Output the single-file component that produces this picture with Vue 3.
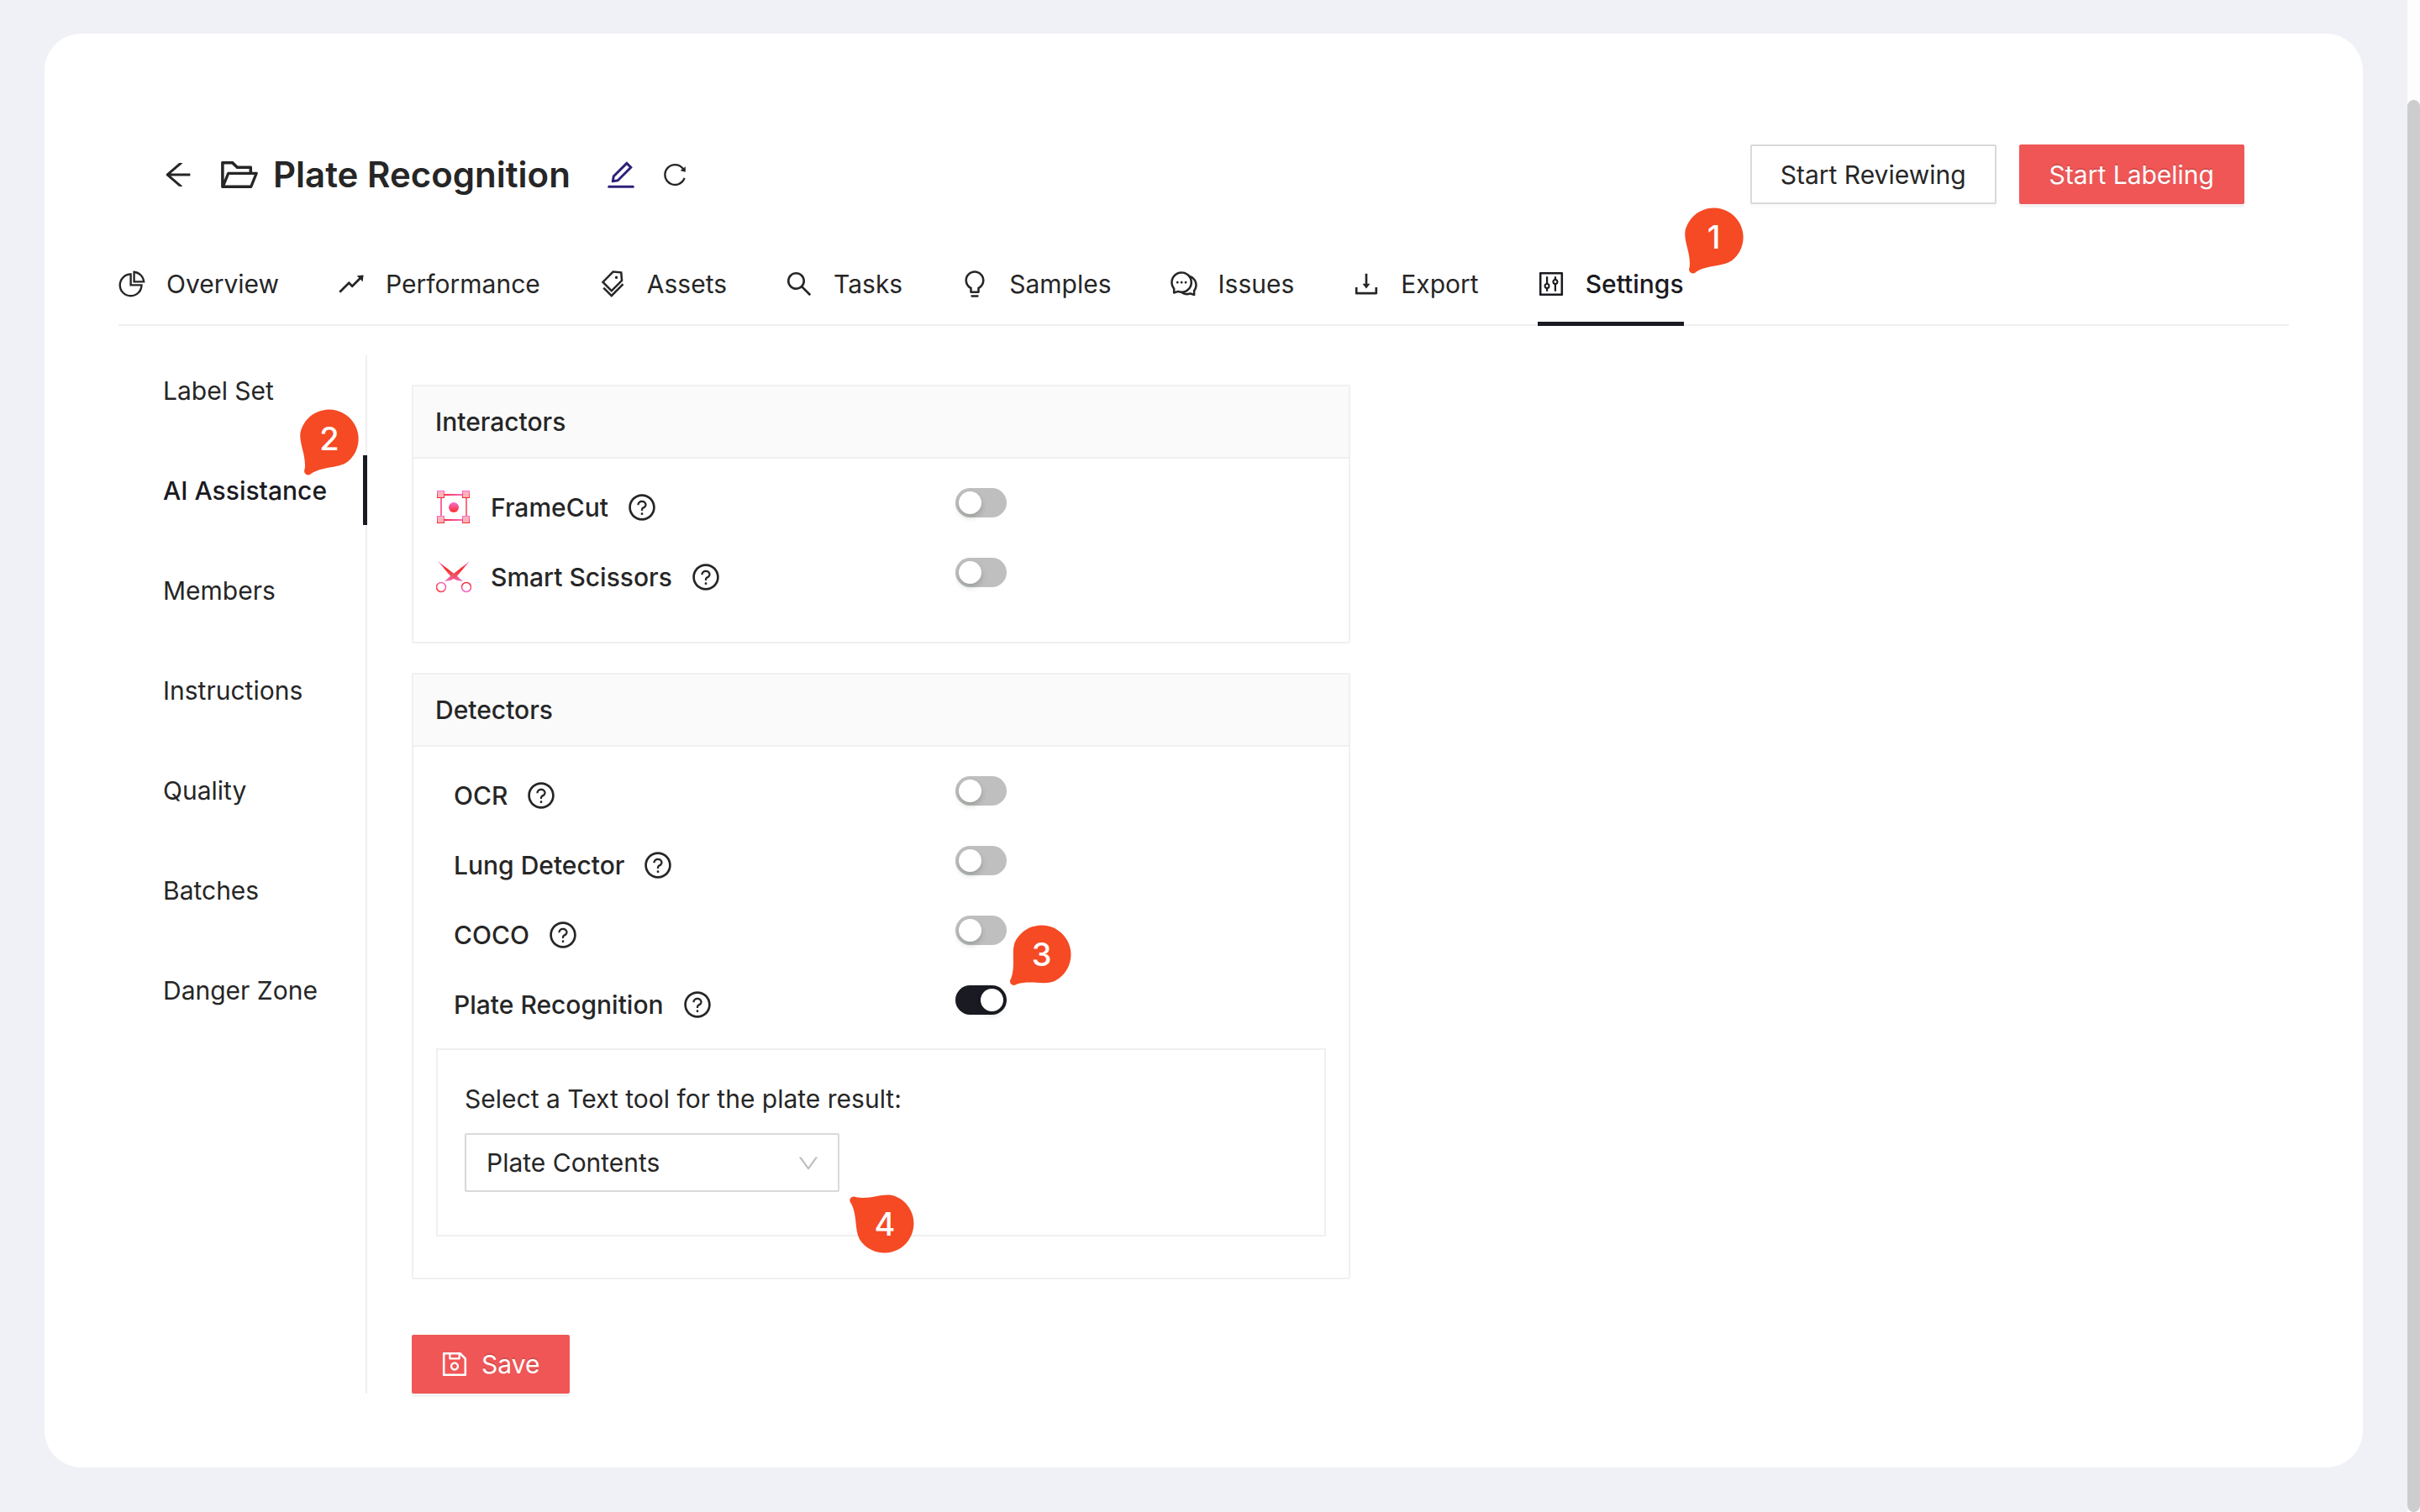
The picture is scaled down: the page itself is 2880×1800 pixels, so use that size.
<script setup>
import { ref } from 'vue'

const icons = {
  back: ['M872 474H286.9l350.2-304c5.6-4.9 2.2-14-5.2-14h-88.5c-3.9 0-7.6 1.4-10.5 3.9L155 487.8a31.96 31.96 0 000 48.3L535.1 866c1.5 1.3 3.3 2 5.2 2h91.5c7.4 0 10.8-9.2 5.2-14L286.9 550H872c4.4 0 8-3.6 8-8v-60c0-4.4-3.6-8-8-8z'],
  folder: ['M928 444H820V330.4c0-17.7-14.3-32-32-32H473L355.7 186.2a8.15 8.15 0 00-5.5-2.2H96c-17.7 0-32 14.3-32 32v592c0 17.7 14.3 32 32 32h698c13 0 24.8-7.9 29.7-20l134-332c1.5-3.8 2.3-7.9 2.3-12 0-17.7-14.3-32-32-32zM136 256h188.5l119.6 114.4H748V444H238c-13 0-24.8 7.9-29.7 20L136 643.2V256zm635.3 512H159l103.3-256h612.4L771.3 768z'],
  edit: ['M257.7 752c2 0 4-.2 6-.5L431.9 722c2-.4 3.9-1.3 5.3-2.8l423.9-423.9a9.96 9.96 0 000-14.1L694.9 114.9c-1.9-1.9-4.4-2.9-7.1-2.9s-5.2 1-7.1 2.9L256.8 538.8c-1.5 1.5-2.4 3.3-2.8 5.3l-29.5 168.2a33.5 33.5 0 009.4 29.8c6.6 6.4 14.9 9.9 23.8 9.9zm67.4-174.4L687.8 215l73.3 73.3-362.7 362.6-88.9 15.7 15.6-89zM880 836H144c-17.7 0-32 14.3-32 32v36c0 4.4 3.6 8 8 8h784c4.4 0 8-3.6 8-8v-36c0-17.7-14.3-32-32-32z'],
  reload: ['M909.1 209.3l-56.4 44.1C775.8 155.1 656.2 92 521.9 92 290 92 102.3 279.5 102 511.5 101.7 743.7 289.8 932 521.9 932c181.3 0 335.8-115 394.6-276.1 1.5-4.2-.7-8.9-4.9-10.3l-56.7-19.5a8 8 0 00-10.1 4.8c-1.8 5-3.8 10-5.9 14.9-17.3 41-42.1 77.8-73.7 109.4A344.77 344.77 0 01655.9 829c-42.3 17.9-87.4 27-133.8 27-46.5 0-91.5-9.1-133.8-27A341.5 341.5 0 01279 755.2a342.16 342.16 0 01-73.7-109.4c-17.9-42.4-27-87.4-27-133.9s9.1-91.5 27-133.9c17.3-41 42.1-77.8 73.7-109.4 31.6-31.6 68.4-56.4 109.3-73.8 42.3-17.9 87.4-27 133.8-27 46.5 0 91.5 9.1 133.8 27a341.5 341.5 0 01109.3 73.8c9.9 9.9 19.2 20.4 27.8 31.4l-60.2 47a8 8 0 003 14.1l175.6 43c5 1.2 9.9-2.6 9.9-7.7l.8-180.9c-.1-6.6-7.8-10.3-13-6.2z'],
  help: [
    'M512 64C264.6 64 64 264.6 64 512s200.6 448 448 448 448-200.6 448-448S759.4 64 512 64zm0 820c-205.4 0-372-166.6-372-372s166.6-372 372-372 372 166.6 372 372-166.6 372-372 372z',
    'M623.6 316.7C593.6 290.4 554 276 512 276s-81.6 14.5-111.6 40.7C369.2 344 352 380.7 352 420v7.6c0 4.4 3.6 8 8 8h48c4.4 0 8-3.6 8-8V420c0-44.1 43.1-80 96-80s96 35.9 96 80c0 31.1-22 59.6-56.1 72.7-21.2 8.1-39.2 22.3-52.1 40.9-13.1 19-19.9 41.8-19.9 64.9V620c0 4.4 3.6 8 8 8h48c4.4 0 8-3.6 8-8v-22.7a48.3 48.3 0 0130.9-44.8c59-22.7 97.1-74.7 97.1-132.5.1-39.3-17.1-76-48.3-103.3zM472 732a40 40 0 1080 0 40 40 0 10-80 0z'
  ],
  save: ['M893.3 293.3L730.7 130.7c-7.5-7.5-16.7-13-26.7-16V112H144c-17.7 0-32 14.3-32 32v736c0 17.7 14.3 32 32 32h736c17.7 0 32-14.3 32-32V338.5c0-17-6.7-33.2-18.7-45.2zM384 184h256v104H384V184zm456 656H184V184h136v136c0 17.7 14.3 32 32 32h320c17.7 0 32-14.3 32-32V205.8l136 136V840zM512 442c-79.5 0-144 64.5-144 144s64.5 144 144 144 144-64.5 144-144-64.5-144-144-144zm0 224c-44.2 0-80-35.8-80-80s35.8-80 80-80 80 35.8 80 80-35.8 80-80 80z'],
  down: ['M884 256h-75c-5.1 0-9.9 2.5-12.9 6.6L512 654.2 227.9 262.6c-3-4.1-7.8-6.6-12.9-6.6h-75c-6.5 0-10.3 7.4-6.5 12.7l352.6 486.1c12.8 17.6 39 17.6 51.7 0l352.6-486.1c3.9-5.3.1-12.7-6.4-12.7z']
}

const tabs = [
  { label: 'Overview', paths: ['M864 518H506V160c0-4.4-3.6-8-8-8h-26a398.46 398.46 0 00-282.8 117.1 398.19 398.19 0 00-85.7 127.1A397.61 397.61 0 0072 552a398.46 398.46 0 00117.1 282.8c36.7 36.7 79.5 65.6 127.1 85.7A397.61 397.61 0 00472 952a398.46 398.46 0 00282.8-117.1c36.7-36.7 65.6-79.5 85.7-127.1A397.61 397.61 0 00872 552v-26c0-4.4-3.6-8-8-8zM705.7 787.8A331.59 331.59 0 01470.4 884c-88.1-.4-170.9-34.9-233.2-97.2C174.5 724.1 140 640.7 140 552c0-88.7 34.5-172.1 97.2-234.8 54.6-54.6 124.9-87.9 200.8-95.5V586h364.3c-7.7 76.3-41.3 147-96.6 201.8zM952 462.4l-2.6-28.2c-8.5-92.1-49.4-179-115.2-244.6A399.4 399.4 0 00589 74.6L560.7 72c-4.7-.4-8.7 3.2-8.7 7.9V464c0 4.4 3.6 8 8 8l384-1c4.7 0 8.4-4 8-8.6zm-332.2-58.2V147.6a332.24 332.24 0 01166.4 89.8c45.7 45.6 77 103.6 90 166.1l-256.4.7z'] },
  { label: 'Performance', paths: ['M917 211.1l-199.2 24c-6.6.8-9.4 8.9-4.7 13.6l59.3 59.3-226 226-101.8-101.7c-6.3-6.3-16.4-6.2-22.6 0L100.3 754.1a8.03 8.03 0 000 11.3l45 45.2c3.1 3.1 8.2 3.1 11.3 0L433.3 534 535 635.7c6.3 6.2 16.4 6.2 22.6 0L829 364.5l59.3 59.3a8.01 8.01 0 0013.6-4.7l24-199.2c.7-5.1-3.7-9.5-8.9-8.8z'] },
  { label: 'Assets', paths: ['M483.2 790.3L861.4 412c1.7-1.7 2.5-4 2.3-6.3l-25.5-301.4c-.7-7.8-6.8-13.9-14.6-14.6L522.2 64.3c-2.3-.2-4.7.6-6.3 2.3L137.7 444.8a8.03 8.03 0 000 11.3l334.2 334.2c3.1 3.2 8.2 3.2 11.3 0zm62.6-651.7l224.6 19 19 224.6L477.5 694 233.9 450.5l311.9-311.9zm60.16 186.23a48 48 0 1067.88-67.89 48 48 0 10-67.88 67.89zM889.7 539.8l-39.6-39.5a8.03 8.03 0 00-11.3 0l-362 361.3-237.6-237a8.03 8.03 0 00-11.3 0l-39.6 39.5a8.03 8.03 0 000 11.3l243.2 242.8 39.6 39.5c3.1 3.1 8.2 3.1 11.3 0l407.3-406.6c3.1-3.1 3.1-8.2 0-11.3z'] },
  { label: 'Tasks', paths: ['M909.6 854.5L649.9 594.8C690.2 542.7 712 479 712 412c0-80.2-31.3-155.4-87.9-212.1-56.6-56.7-132-87.9-212.1-87.9s-155.5 31.3-212.1 87.9C143.2 256.5 112 331.8 112 412c0 80.1 31.3 155.5 87.9 212.1C256.5 680.8 331.8 712 412 712c67 0 130.6-21.8 182.7-62l259.7 259.6a8.2 8.2 0 0011.6 0l43.6-43.5a8.2 8.2 0 000-11.6zM570.4 570.4C528 612.7 471.8 636 412 636s-116-23.3-158.4-65.6C211.3 528 188 471.8 188 412s23.3-116.1 65.6-158.4C296 211.3 352.2 188 412 188s116.1 23.2 158.4 65.6S636 352.2 636 412s-23.3 116.1-65.6 158.4z'] },
  { label: 'Samples', paths: ['M632 888H392c-4.4 0-8 3.6-8 8v32c0 17.7 14.3 32 32 32h192c17.7 0 32-14.3 32-32v-32c0-4.4-3.6-8-8-8zM512 64c-181.1 0-328 146.9-328 328 0 121.4 66 227.4 164 284.1V792c0 17.7 14.3 32 32 32h264c17.7 0 32-14.3 32-32V676.1c98-56.7 164-162.7 164-284.1 0-181.1-146.9-328-328-328zm127.9 549.8L604 634.6V752H420V634.6l-35.9-20.8C305.4 568.3 256 484.5 256 392c0-141.4 114.6-256 256-256s256 114.6 256 256c0 92.5-49.4 176.3-128.1 221.8z'] },
  { label: 'Issues', paths: ['M573 421c-23.1 0-41 17.9-41 40s17.9 40 41 40c21.1 0 39-17.9 39-40s-17.9-40-39-40zm-280 0c-23.1 0-41 17.9-41 40s17.9 40 41 40c21.1 0 39-17.9 39-40s-17.9-40-39-40z', 'M894 345a343.92 343.92 0 00-189-130v.1c-17.1-19-36.4-36.5-58-52.1-163.7-119-393.5-82.7-513 81-96.3 133-92.2 311.9 6 439l.8 132.6c0 3.2.5 6.4 1.5 9.4a31.95 31.95 0 0040.1 20.9L309 806c33.5 11.9 68.1 18.7 102.5 20.6l-.5.4c89.1 64.9 205.9 84.4 313 49l127.1 41.4c3.2 1 6.5 1.6 9.9 1.6 17.7 0 32-14.3 32-32V753c88.1-119.6 90.4-284.9 1-408zM323 735l-12-5-99 31-1-104-8-9c-84.6-103.2-90.2-251.9-11-361 96.4-132.2 281.2-161.4 413-66 132.2 96.1 161.5 280.6 66 412-80.1 109.9-223.5 150.5-348 102zm505-17l-8 10 1 104-98-33-12 5c-56 20.8-115.7 22.5-171 7l-.2-.1A367.31 367.31 0 00729 676c76.4-105.3 88.8-237.6 44.4-350.4l.6.4c23 16.5 44.1 37.1 62 62 72.6 99.6 68.5 235.2-8 330z', 'M433 421c-23.1 0-41 17.9-41 40s17.9 40 41 40c21.1 0 39-17.9 39-40s-17.9-40-39-40z'] },
  { label: 'Export', paths: ['M505.7 661a8 8 0 0012.6 0l112-141.7c4.1-5.2.4-12.9-6.3-12.9h-74.1V168c0-4.4-3.6-8-8-8h-60c-4.4 0-8 3.6-8 8v338.3H400c-6.7 0-10.4 7.7-6.3 12.9l112 141.8zM878 626h-60c-4.4 0-8 3.6-8 8v154H214V634c0-4.4-3.6-8-8-8h-60c-4.4 0-8 3.6-8 8v198c0 17.7 14.3 32 32 32h684c17.7 0 32-14.3 32-32V634c0-4.4-3.6-8-8-8z'] },
  { label: 'Settings', active: true, paths: [
    'M880 112H144c-17.7 0-32 14.3-32 32v736c0 17.7 14.3 32 32 32h736c17.7 0 32-14.3 32-32V144c0-17.7-14.3-32-32-32zm-40 728H184V184h656v656z',
    'M340 264h64v222a104 104 0 010 197v77h-64v-77a104 104 0 010-197zM372 542a42 42 0 100 84 42 42 0 000-84z',
    'M620 264h64v77a104 104 0 010 197v222h-64V538a104 104 0 010-197zM652 398a42 42 0 100 84 42 42 0 000-84z'
  ] }
]

const sections = ['Label Set', 'AI Assistance', 'Members', 'Instructions', 'Quality', 'Batches', 'Danger Zone']
const activeSection = 'AI Assistance'

const interactors = ref([
  { id: 'framecut', label: 'FrameCut', on: false },
  { id: 'scissors', label: 'Smart Scissors', on: false }
])
const detectors = ref([
  { id: 'ocr', label: 'OCR', on: false },
  { id: 'lung', label: 'Lung Detector', on: false },
  { id: 'coco', label: 'COCO', on: false },
  { id: 'plate', label: 'Plate Recognition', on: true }
])
const textTool = ref('Plate Contents')

const pinShape = 'M-34 9C-31 23-13 30-5 46Q-4 51 0 51Q4 51 5 46C13 30 31 23 34 9A35 35 0 1 0-34 9Z'
</script>

<template>
  <div class="page">
    <main class="main">
      <div class="card">
        <header class="header">
          <button class="icon-btn back" aria-label="Back">
            <svg class="i40" viewBox="0 0 1024 1024"><path :d="icons.back[0]" /></svg>
          </button>
          <svg class="i50" viewBox="0 0 1024 1024"><path :d="icons.folder[0]" /></svg>
          <h1 class="title">Plate Recognition</h1>
          <button class="icon-btn edit" aria-label="Rename">
            <svg class="i40" viewBox="0 0 1024 1024"><path :d="icons.edit[0]" /></svg>
          </button>
          <button class="icon-btn" aria-label="Reload">
            <svg class="i32" viewBox="0 0 1024 1024"><path :d="icons.reload[0]" /></svg>
          </button>
          <div class="actions">
            <button class="btn">Start Reviewing</button>
            <button class="btn primary">Start Labeling</button>
          </div>
        </header>

        <nav class="tabs">
          <a v-for="tab in tabs" :key="tab.label" href="#" class="tab" :class="{ active: tab.active }">
            <svg class="i36 tab-icon" viewBox="0 0 1024 1024"><path v-for="d in tab.paths" :key="d" :d="d" fill-rule="evenodd" /></svg>
            <span>{{ tab.label }}</span>
            <span v-if="tab.active" class="pin pin-1">
              <svg class="tail" viewBox="-52 -52 104 104"><path :d="pinShape" /></svg>
              <span class="num">1</span>
            </span>
          </a>
        </nav>

        <div class="body">
          <nav class="side">
            <a v-for="name in sections" :key="name" href="#" class="side-item" :class="{ active: name === activeSection }">
              {{ name }}
              <span v-if="name === activeSection" class="pin pin-2">
                <svg class="tail" viewBox="-52 -52 104 104"><path :d="pinShape" /></svg>
                <span class="num">2</span>
              </span>
            </a>
          </nav>

          <div class="content">
            <section class="panel">
              <h2 class="panel-head">Interactors</h2>
              <div class="panel-body interactors">
                <div v-for="item in interactors" :key="item.id" class="row">
                  <div class="row-label">
                    <svg v-if="item.id === 'framecut'" class="tool" viewBox="-1 0 42 40">
                      <defs>
                        <linearGradient id="fc-h" x1="0" y1="0" x2="1" y2="0"><stop offset="0" stop-color="#f92a3c" /><stop offset="1" stop-color="#f66fd0" /></linearGradient>
                        <linearGradient id="fc-v" x1="0" y1="0" x2="0" y2="1"><stop offset="0" stop-color="#f66fd0" /><stop offset="1" stop-color="#fb2b2b" /></linearGradient>
                      </defs>
                      <path d="M8 4h24v2H8z" fill="url(#fc-h)" />
                      <path d="M8 34h24v2H8z" fill="url(#fc-h)" />
                      <path d="M4 9h2v22H4z" fill="#f96aa0" />
                      <path d="M34 9h2v22h-2z" fill="#f8707c" />
                      <g fill="#fbb3bb" stroke-width="1">
                        <rect x=".5" y=".5" width="8" height="8" stroke="url(#fc-v)" />
                        <rect x="30.500" y=".5" width="8" height="8" stroke="url(#fc-v)" />
                        <rect x=".5" y="30.500" width="8" height="8" stroke="url(#fc-v)" />
                        <rect x="30.500" y="30.500" width="8" height="8" stroke="url(#fc-v)" />
                      </g>
                      <circle cx="20" cy="20" r="6" fill="url(#fc-v)" />
                    </svg>
                    <svg v-else class="tool" viewBox="0 0 42 40">
                      <defs>
                        <linearGradient id="sc-l" x1="0" y1="0" x2="1" y2="1"><stop offset="0" stop-color="#f66fd0" /><stop offset=".35" stop-color="#fb2b2b" /><stop offset=".65" stop-color="#ee5060" /><stop offset="1" stop-color="#f66fd0" /></linearGradient>
                        <linearGradient id="sc-r" x1="1" y1="0" x2="0" y2="1"><stop offset="0" stop-color="#f66fd0" /><stop offset=".35" stop-color="#fb2b2b" /><stop offset=".65" stop-color="#ee5060" /><stop offset="1" stop-color="#f66fd0" /></linearGradient>
                        <linearGradient id="sc-a" x1="1" y1="0" x2="0" y2="1"><stop offset="0" stop-color="#f66fd0" /><stop offset="1" stop-color="#fb3b2b" /></linearGradient>
                        <linearGradient id="sc-b" x1="0" y1="0" x2="0" y2="1"><stop offset="0" stop-color="#fb2b2b" /><stop offset="1" stop-color="#f66fd0" /></linearGradient>
                      </defs>
                      <path d="M2 1L24 18L32 25L25 24L19 21Z" fill="url(#sc-l)" />
                      <path d="M40 1L18 18L10 25L17 24L23 21Z" fill="url(#sc-r)" />
                      <circle cx="6" cy="32" r="5.500" fill="none" stroke="url(#sc-a)" stroke-width="1.600" />
                      <circle cx="36" cy="32" r="5.500" fill="none" stroke="url(#sc-b)" stroke-width="1.600" />
                    </svg>
                    <label :for="item.id">{{ item.label }}</label>
                    <svg class="i36 help" viewBox="0 0 1024 1024"><path v-for="d in icons.help" :key="d" :d="d" /></svg>
                  </div>
                  <input :id="item.id" v-model="item.on" type="checkbox" class="switch" />
                </div>
              </div>
            </section>

            <section class="panel">
              <h2 class="panel-head">Detectors</h2>
              <div class="panel-body">
                <div v-for="item in detectors" :key="item.id" class="row">
                  <div class="row-label indent">
                    <label :for="item.id">{{ item.label }}</label>
                    <svg class="i36 help" viewBox="0 0 1024 1024"><path v-for="d in icons.help" :key="d" :d="d" /></svg>
                  </div>
                  <div class="row-control">
                    <input :id="item.id" v-model="item.on" type="checkbox" class="switch" />
                    <span v-if="item.id === 'plate'" class="pin pin-3">
                      <svg class="tail" viewBox="-52 -52 104 104"><path :d="pinShape" /></svg>
                      <span class="num">3</span>
                    </span>
                  </div>
                </div>
                <div class="subpanel">
                  <label for="text-tool" class="sub-label">Select a Text tool for the plate result:</label>
                  <div class="select-wrap">
                    <select id="text-tool" v-model="textTool" class="select">
                      <option>Plate Contents</option>
                    </select>
                    <svg class="chevron" viewBox="0 0 1024 1024"><path :d="icons.down[0]" /></svg>
                    <span class="pin pin-4">
                      <svg class="tail" viewBox="-52 -52 104 104"><path :d="pinShape" /></svg>
                      <span class="num">4</span>
                    </span>
                  </div>
                </div>
              </div>
            </section>

            <button class="btn primary save">
              <svg class="i36" viewBox="0 0 1024 1024"><path :d="icons.save[0]" /></svg>
              <span>Save</span>
            </button>
          </div>
        </div>
      </div>
    </main>
    <div class="scrollbar"><div class="thumb"></div></div>
  </div>
</template>

<style>
body {
  margin: 0;
  background: #f0f1f6;
}
</style>

<style scoped>
.page {
  display: flex;
  min-height: 100vh;
  background: #f0f1f6;
  color: #262626;
  font: 400 30px/46px Inter, "Liberation Sans", sans-serif;
}
.page * { box-sizing: border-box; }
svg { display: block; flex: none; fill: currentColor; }
a { color: inherit; text-decoration: none; }
button { font: inherit; color: inherit; cursor: pointer; }
.i32 { width: 32px; height: 32px; }
.i36 { width: 36px; height: 36px; }
.i40 { width: 40px; height: 40px; }
.i50 { width: 50px; height: 50px; }

.main { flex: 1; min-width: 0; padding: 40px 53px 53px; }
.card { padding: 132px 88px 88px; background: #fff; border-radius: 44px; }

.scrollbar { display: flex; flex-direction: column; width: 15px; padding-top: 119px; background: #fdfdfd; }
.thumb { flex: 1; background: #cdcdcd; border-radius: 8px; }

.header { display: flex; align-items: center; padding: 0 53px 0 51px; }
.icon-btn { padding: 0; border: 0; background: none; }
.back { margin-right: 28px; }
.title { margin: 0 40px 0 15px; font-size: 42px; line-height: 56px; font-weight: 600; }
.edit { margin-right: 28px; color: #2f1f7a; }
.actions { display: flex; gap: 27px; margin-left: auto; }

.btn {
  height: 71px;
  padding: 0 34px;
  border: 2px solid #d9d9d9;
  border-radius: 2px;
  background: #fff;
  box-shadow: 0 4px 0 rgba(0, 0, 0, 0.016);
}
.btn.primary {
  border-color: #f05656;
  background: #f05656;
  color: #fff;
  text-shadow: 0 -2px 0 rgba(0, 0, 0, 0.12);
  box-shadow: 0 4px 0 rgba(0, 0, 0, 0.043);
}

.tabs { display: flex; gap: 70px; margin-top: 53px; border-bottom: 2px solid #f0f0f0; }
.tab {
  position: relative;
  display: flex;
  align-items: center;
  gap: 23px;
  margin-bottom: -2px;
  padding: 19px 0 22px;
  border-bottom: 5px solid transparent;
}
.tab-icon { margin-left: -2px; }
.tab.active { border-color: #1a1a22; color: #1a1a22; font-weight: 500; }

.body { display: flex; margin-top: 35px; }
.side {
  display: flex;
  flex-direction: column;
  gap: 36px;
  width: 296px;
  border-right: 2px solid #f0f0f0;
}
.side-item {
  position: relative;
  height: 83px;
  margin-right: -2px;
  padding-left: 53px;
  border-right: 5px solid transparent;
  line-height: 84px;
}
.side-item.active { border-color: #1a1a22; color: #1a1a22; font-weight: 500; }

.content { flex: 1; padding: 35px 0 0 53px; }
.panel { width: 50%; margin-bottom: 35px; border: 2px solid #f0f0f0; border-radius: 2px; }
.panel-head {
  margin: 0;
  padding: 19px 26px;
  border-bottom: 2px solid #f0f0f0;
  background: #fafafa;
  font-size: 30px;
  font-weight: 500;
}
.panel-body { padding: 35px 27px 49px; }
.panel-body.interactors { padding-bottom: 54px; }
.row { display: grid; grid-template-columns: 14fr 10fr; align-items: start; }
.row + .row { margin-top: 37px; }
.row-label { display: flex; align-items: center; font-weight: 500; }
.row-label.indent { padding-left: 21px; }
.tool { width: 42px; height: 40px; margin-right: 23px; }
.help { margin-left: 22px; }
.row-control { position: relative; display: flex; }

.switch {
  appearance: none;
  position: relative;
  width: 61px;
  height: 35px;
  margin: 0;
  border-radius: 18px;
  background: #bfbfbf;
}
.switch::before {
  content: "";
  position: absolute;
  top: 4px;
  left: 4px;
  width: 27px;
  height: 27px;
  border-radius: 50%;
  background: #fff;
  box-shadow: 0 4px 7px rgba(0, 35, 11, 0.2);
}
.switch:checked { background: #1a1a22; }
.switch:checked::before { left: 30px; }

.subpanel { margin-top: 29px; padding: 35px 32px 51px; border: 2px solid #f0f0f0; }
.sub-label { display: block; margin-bottom: 18px; }
.select-wrap { position: relative; width: 446px; }
.select {
  appearance: none;
  display: block;
  width: 100%;
  height: 70px;
  padding: 0 24px;
  border: 2px solid #d9d9d9;
  border-radius: 2px;
  background: #fff;
  color: inherit;
  font: inherit;
}
.chevron { position: absolute; top: 21px; right: 22px; width: 30px; height: 30px; color: #bfbfbf; }

.save { display: flex; align-items: center; gap: 14px; height: 70px; margin-top: 66px; padding: 0 34px 0 31px; box-shadow: none; }

.pin {
  position: absolute;
  z-index: 1;
  display: grid;
  place-items: center;
  width: 70px;
  height: 70px;
  color: #fff;
  font-size: 38px;
  font-weight: 500;
  line-height: 70px;
}
.tail { position: absolute; top: -17px; left: -17px; width: 104px; height: 104px; color: #f54a24; }
.num { position: relative; }
.pin-1 { top: -49px; right: -71px; }
.pin-1 .tail, .pin-2 .tail { transform: rotate(33deg); }
.pin-2 { top: -55px; right: 5px; }
.pin-3 { top: -72px; left: 68px; }
.pin-3 .tail { transform: rotate(46deg); }
.pin-4 { top: 73px; right: -89px; }
.pin-4 .tail { transform: rotate(127deg); }
</style>
